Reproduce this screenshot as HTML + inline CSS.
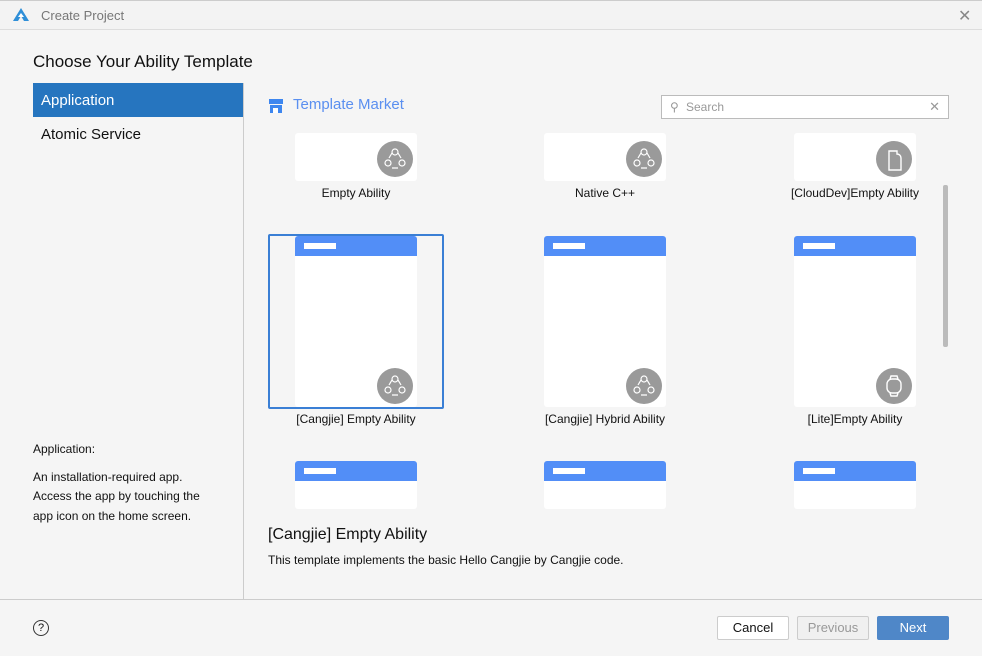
<!DOCTYPE html><html><head><style>
body{margin:0;width:982px;height:656px;background:#f5f5f5;font-family:"Liberation Sans",sans-serif;position:relative;overflow:hidden;color:#111}
.a{position:absolute}
.card{position:absolute;width:122px;background:#fff;border-radius:3px;overflow:hidden}
.hdr{height:20px;background:#528ef7;position:relative}
.hdr:after{content:"";position:absolute;left:9px;top:7px;width:32px;height:6px;background:#fff}
.ic{position:absolute;width:36px;height:36px;border-radius:50%;background:#9a9a9a}
.ic svg{position:absolute;left:0;top:0}
.lbl{position:absolute;font-size:12px;text-align:center;width:200px;color:#111}
.btn{position:absolute;top:616px;width:70px;height:22px;border:1px solid #ccc;font-size:13px;text-align:center;line-height:22px;border-radius:2px}
</style></head><body>
<div class="a" style="left:0;top:0;width:982px;height:30px;border-top:1px solid #ccc;border-bottom:1px solid #ddd;background:#f3f3f3;box-sizing:border-box"></div>
<svg class="a" style="left:13px;top:8px" width="16" height="13"><path d="M8 0L0 13h5l3-5 3 5h5z" fill="#2f8fd8"/><path d="M8 5l-3 4h6z" fill="#fff"/></svg>
<div class="a" style="left:41px;top:8px;font-size:13px;color:#777">Create Project</div>
<div class="a" style="left:958px;top:6px;font-size:16px;color:#888">✕</div>
<div class="a" style="left:33px;top:52px;font-size:17px">Choose Your Ability Template</div>
<div class="a" style="left:33px;top:83px;width:210px;height:34px;background:#2675bf;color:#fff;font-size:15px;line-height:34px;box-sizing:border-box;padding-left:8px;padding-top:1px">Application</div>
<div class="a" style="left:41px;top:126px;font-size:15px">Atomic Service</div>
<div class="a" style="left:243px;top:83px;width:1px;height:516px;background:#ccc"></div>
<div class="a" style="left:33px;top:440px;font-size:12px;line-height:19.5px;width:190px">Application:<br><div style="margin-top:8px">An installation-required app. Access the app by touching the app icon on the home screen.</div></div>
<svg class="a" style="left:269px;top:99px" width="14" height="14"><rect x="0" y="0" width="14" height="5" fill="#3d86ef"/><rect x="1" y="6" width="12" height="8" fill="#3d86ef"/><rect x="4" y="9" width="5" height="5" fill="#fff"/></svg>
<div class="a" style="left:293px;top:96px;font-size:15px;color:#5a8ff0">Template Market</div>
<div class="a" style="left:661px;top:95px;width:288px;height:24px;border:1px solid #bbb;background:#fff;box-sizing:border-box;font-size:12px;color:#999;line-height:22px;padding-left:24px">Search<span style="position:absolute;left:8px;top:0">⚲</span><span style="position:absolute;right:8px;top:0;font-size:13px">✕</span></div>
<svg width="0" height="0" style="position:absolute"><defs><g id="g"><g fill="none" stroke="#fff" stroke-width="1.2"><circle cx="18" cy="11" r="3"/><circle cx="11" cy="22" r="3"/><circle cx="25" cy="22" r="3"/><path d="M15 12l-3 5M21 12l3 5M15 27h6"/></g></g></defs></svg>
<!-- row1 -->
<div class="card" style="left:295px;top:133px;height:48px"></div><div class="ic" style="left:377px;top:141px"><svg width="36" height="36"><use href="#g"/></svg></div>
<div class="card" style="left:544px;top:133px;height:48px"></div><div class="ic" style="left:626px;top:141px"><svg width="36" height="36"><use href="#g"/></svg></div>
<div class="card" style="left:794px;top:133px;height:48px"></div><div class="ic" style="left:876px;top:141px"><svg width="36" height="36"><path d="M13 10h8v3a4 4 0 0 1 4 4h0v12H13z" fill="none" stroke="#fff" stroke-width="1.4"/></svg></div>
<div class="lbl" style="left:256px;top:186px">Empty Ability</div>
<div class="lbl" style="left:505px;top:186px">Native C++</div>
<div class="lbl" style="left:755px;top:186px">[CloudDev]Empty Ability</div>
<!-- row2 -->
<div class="a" style="left:268px;top:234px;width:176px;height:175px;border:2px solid #3a7fd5;border-radius:2px;box-sizing:border-box"></div>
<div class="card" style="left:295px;top:236px;height:171px"><div class="hdr"></div></div><div class="ic" style="left:377px;top:368px"><svg width="36" height="36"><use href="#g"/></svg></div>
<div class="card" style="left:544px;top:236px;height:171px"><div class="hdr"></div></div><div class="ic" style="left:626px;top:368px"><svg width="36" height="36"><use href="#g"/></svg></div>
<div class="card" style="left:794px;top:236px;height:171px"><div class="hdr"></div></div><div class="ic" style="left:876px;top:368px"><svg width="36" height="36"><rect x="11" y="11" width="14" height="14" rx="5" fill="none" stroke="#fff" stroke-width="1.4"/><path d="M14 11l1-3h6l1 3M14 25l1 3h6l1-3" fill="none" stroke="#fff" stroke-width="1.4"/></svg></div>
<div class="lbl" style="left:256px;top:412px">[Cangjie] Empty Ability</div>
<div class="lbl" style="left:505px;top:412px">[Cangjie] Hybrid Ability</div>
<div class="lbl" style="left:755px;top:412px">[Lite]Empty Ability</div>
<!-- row3 -->
<div class="card" style="left:295px;top:461px;height:48px"><div class="hdr"></div></div>
<div class="card" style="left:544px;top:461px;height:48px"><div class="hdr"></div></div>
<div class="card" style="left:794px;top:461px;height:48px"><div class="hdr"></div></div>
<div class="a" style="left:943px;top:185px;width:5px;height:162px;background:#bbb;border-radius:2px"></div>
<div class="a" style="left:244px;top:515px;width:738px;height:84px;background:#f5f5f5"></div>
<div class="a" style="left:268px;top:526px;font-size:16px">[Cangjie] Empty Ability</div>
<div class="a" style="left:268px;top:553px;font-size:12px">This template implements the basic Hello Cangjie by Cangjie code.</div>
<div class="a" style="left:0;top:599px;width:982px;height:1px;background:#ccc"></div>
<div class="a" style="left:33px;top:620px;width:14px;height:14px;border:1px solid #333;border-radius:50%;font-size:11px;text-align:center;line-height:14px">?</div>
<div class="btn" style="left:717px;background:#fff">Cancel</div>
<div class="btn" style="left:797px;background:#f0f0f0;color:#999">Previous</div>
<div class="btn" style="left:877px;background:#4f87c8;border-color:#4f87c8;color:#fff">Next</div>
</body></html>
